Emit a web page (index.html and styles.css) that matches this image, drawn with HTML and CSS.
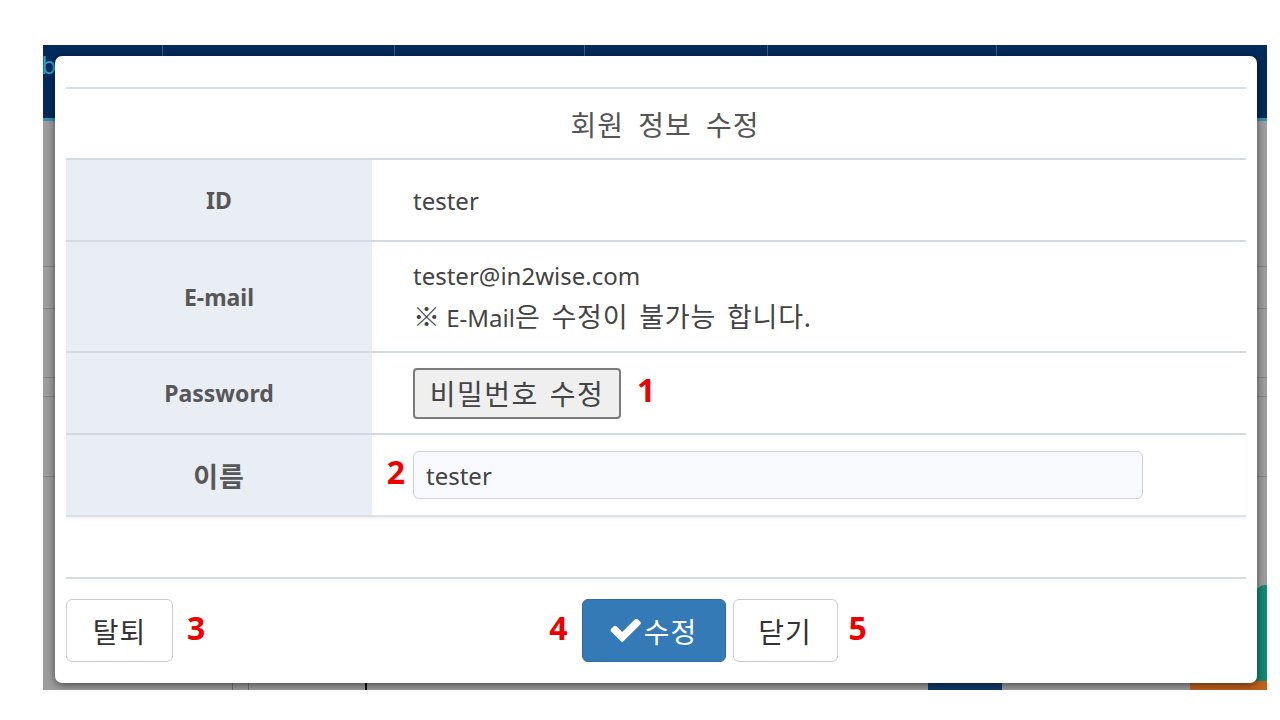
FILE: index.html
```html
<!DOCTYPE html>
<html lang="ko">
<head>
<meta charset="utf-8">
<title>회원 정보 수정</title>
<link rel="stylesheet" href="styles.css">
</head>
<body>
<div class="screen">
  <nav class="topnav">
    <div class="nav-item active"><span class="first">Hub</span></div>
    <div class="nav-item">Workbench</div>
    <div class="nav-item">Project</div>
    <div class="nav-item">Storage</div>
    <div class="nav-item">Monitoring</div>
    <div class="nav-item">Management</div>
  </nav>
  <div class="under">
    <div class="u-row r1"></div>
    <div class="u-row r2"></div>
    <div class="u-row r3"></div>
    <div class="u-row r4"></div>
    <div class="u-row r5"></div>
  </div>
  <div class="deco teal"></div>
  <div class="deco orange"></div>
  <div class="deco navy"></div>
  <div class="deco blackline"></div>
  <div class="deco greyline1"></div>
  <div class="deco greyline2"></div>

  <div class="modal">
    <div class="m-header"></div>
    <div class="m-title">회원 정보 수정</div>
    <div class="info">
      <div class="row h80">
        <div class="label">ID</div>
        <div class="value">tester</div>
      </div>
      <div class="row h109">
        <div class="label">E-mail</div>
        <div class="value col">
          <span>tester@in2wise.com</span>
          <span><span class="mark">※</span> E-Mail<span class="ko">은 수정이 불가능 합니다.</span></span>
        </div>
      </div>
      <div class="row h80">
        <div class="label">Password</div>
        <div class="value">
          <span class="anchor">
            <button class="pwbtn" type="button">비밀번호 수정</button>
            <span class="anno after-17">1</span>
          </span>
        </div>
      </div>
      <div class="row h80 last">
        <div class="label kor">이름</div>
        <div class="value">
          <span class="anchor">
            <span class="anno before-8">2</span>
            <input class="name-input" type="text" value="tester">
          </span>
        </div>
      </div>
    </div>
    <div class="m-footer">
      <span class="anchor">
        <button class="btn w107" type="button">탈퇴</button>
        <span class="anno after-15">3</span>
      </span>
      <div class="center">
        <span class="anchor">
          <span class="anno before-14">4</span>
          <button class="btn primary w144" type="button"><svg class="check" viewBox="90 360 1590 1170" width="31" height="23"><path fill="#fff" d="M1671 566q0 40-28 68l-724 724-136 136q-28 28-68 28t-68-28l-136-136-362-362q-28-28-28-68t28-68l136-136q28-28 68-28t68 28l294 295 656-657q28-28 68-28t68 28l136 136q28 28 28 68z"/></svg>수정</button>
        </span>
        <span class="anchor">
          <button class="btn w105" type="button">닫기</button>
          <span class="anno after-12">5</span>
        </span>
      </div>
    </div>
  </div>
</div>
</body>
</html>
```
FILE: styles.css
```css
html, body {
  margin: 0;
  padding: 0;
  background: #ffffff;
  font-family: "Noto Sans", "Noto Sans CJK KR", sans-serif;
}

.screen {
  position: relative;
  margin: 45px 0 0 43px;
  width: 1224px;
  height: 645px;
  background: #9e9e9e;
  overflow: hidden;
}

.topnav {
  display: flex;
  height: 73px;
  background: #022a5c;
  border-bottom: 3px solid #3b8fb3;
}

.nav-item {
  box-sizing: border-box;
  padding: 3px 0 0 42px;
  font-size: 24px;
  color: #8f9db3;
  border-right: 1px solid #41597d;
  overflow: hidden;
  white-space: nowrap;
}
.nav-item:nth-child(1) { width: 120px; padding-left: 0; color: #2aa3d0; }
.nav-item:nth-child(2) { width: 232px; }
.nav-item:nth-child(3) { width: 190px; }
.nav-item:nth-child(4) { width: 183px; }
.nav-item:nth-child(5) { width: 229px; }
.nav-item:nth-child(6) { width: 270px; border-right: 0; }
.first { margin-left: -34px; }

.under { display: flex; flex-direction: column; }
.u-row { border-bottom: 1px solid #858585; }
.r1 { height: 145px; }
.r2 { height: 41px; }
.r3 { height: 68px; }
.r4 { height: 18px; }
.r5 { height: 79px; }

.deco { position: absolute; }
.teal { left: 1212px; top: 540px; width: 12px; height: 105px; background: #118a76; border-radius: 10px 0 0 0; }
.orange { left: 1147px; top: 636px; width: 77px; height: 9px; background: #c0611c; }
.navy { left: 885px; top: 636px; width: 74px; height: 9px; background: #123c6c; }
.blackline { left: 322px; top: 636px; width: 2px; height: 9px; background: #111; }
.greyline1 { left: 189px; top: 636px; width: 1px; height: 9px; background: #777; }
.greyline2 { left: 205px; top: 636px; width: 1px; height: 9px; background: #777; }

.modal {
  position: absolute;
  left: 12px;
  top: 11px;
  width: 1202px;
  height: 627px;
  box-sizing: border-box;
  padding: 0 11px;
  background: #ffffff;
  border-radius: 7px;
  box-shadow: 0 2px 8px rgba(0, 0, 0, 0.55);
  display: flex;
  flex-direction: column;
}

.m-header {
  height: 31px;
  border-bottom: 2px solid #d8dee6;
}

.m-title {
  height: 69px;
  display: flex;
  align-items: center;
  justify-content: center;
  padding-left: 18px;
  font-size: 28px;
  letter-spacing: 1px;
  word-spacing: 6px;
  color: #555555;
}

.info { display: flex; flex-direction: column; }

.row {
  display: grid;
  grid-template-columns: 306px 1fr;
  border-top: 2px solid #d3dae4;
}
.row.last { border-bottom: 2px solid #dde2ea; box-shadow: 0 2px 3px rgba(0,0,0,0.05); }
.h80 { height: 80px; }
.h109 { height: 109px; }

.label {
  background: #e9edf4;
  display: flex;
  align-items: center;
  justify-content: center;
  font-size: 23px;
  font-weight: bold;
  color: #575757;
}
.label.kor { font-size: 27px; letter-spacing: 1px; }

.value {
  display: flex;
  align-items: center;
  padding-left: 41px;
  font-size: 24px;
  color: #444444;
}
.value.col {
  flex-direction: column;
  align-items: flex-start;
  justify-content: center;
  line-height: 40px;
}
.mark { font-size: 27px; font-family: "Noto Sans CJK KR", sans-serif; }
.ko { font-size: 27px; letter-spacing: 0.8px; word-spacing: 3px; }

.anchor {
  position: relative;
  display: inline-flex;
  align-items: center;
}

.anno {
  position: absolute;
  top: 50%;
  transform: translateY(calc(-50% - 3px));
  font-family: "Noto Sans", sans-serif;
  font-size: 32px;
  font-weight: bold;
  color: #ee0000;
  line-height: 1;
}
.after-17 { left: calc(100% + 16px); }
.after-15 { left: calc(100% + 14px); }
.after-12 { left: calc(100% + 11px); }
.before-8 { right: calc(100% + 8px); }
.before-14 { right: calc(100% + 14px); }

.pwbtn {
  box-sizing: border-box;
  width: 208px;
  height: 51px;
  background: #efefef;
  border: 2px solid #7b7b7b;
  border-radius: 4px;
  font-family: "Noto Sans", "Noto Sans CJK KR", sans-serif;
  font-size: 28px;
  letter-spacing: 1.5px;
  word-spacing: 2px;
  color: #444444;
  padding: 0;
}

.name-input {
  box-sizing: border-box;
  width: 730px;
  height: 48px;
  border: 1.5px solid #cfd1d6;
  border-radius: 6px;
  background: #f8f9fc;
  padding: 0 12px;
  font-family: "Noto Sans", "Noto Sans CJK KR", sans-serif;
  font-size: 24px;
  color: #444444;
  outline: none;
}

.m-footer {
  margin-top: auto;
  border-top: 2px solid #d5dce6;
  padding: 20px 0 21px;
  display: flex;
  align-items: center;
}

.center {
  flex: 1;
  display: flex;
  justify-content: center;
  gap: 7px;
}

.btn {
  box-sizing: border-box;
  height: 63px;
  border: 1.5px solid #cccccc;
  border-radius: 6px;
  background: #ffffff;
  font-family: "Noto Sans", "Noto Sans CJK KR", sans-serif;
  font-size: 28px;
  letter-spacing: 1px;
  color: #333333;
  padding: 0;
  display: inline-flex;
  align-items: center;
  justify-content: center;
}
.btn.primary {
  background: #337ab7;
  border-color: #2e6da4;
  color: #ffffff;
}
.check { margin-right: 3px; }
.w107 { width: 107px; }
.w144 { width: 144px; }
.w105 { width: 105px; }
```
